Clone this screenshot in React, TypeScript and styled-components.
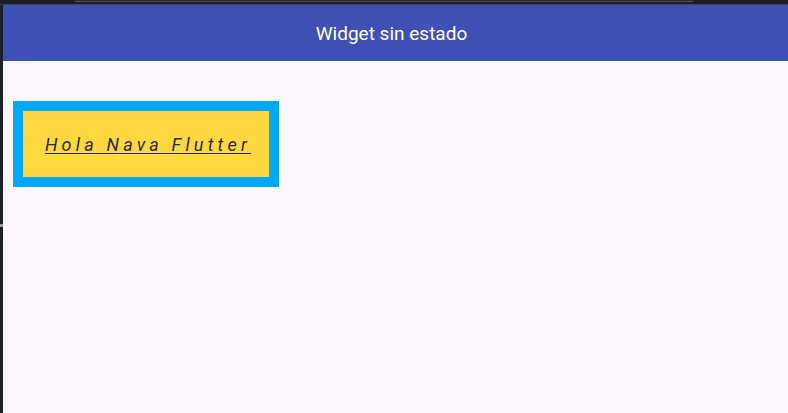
import React from "react";
import styled, { createGlobalStyle } from "styled-components";

const Global = createGlobalStyle`
  html, body { margin: 0; padding: 0; background: #1a202b; }
  body { font-family: Roboto, "Noto Sans", sans-serif; }
  #root { width: 788px; height: 413px; overflow: hidden; }
`;

const Frame = styled.div`
  width: 788px;
  height: 413px;
  display: grid;
  grid-template-columns: 3px 1fr;
  grid-template-rows: 5px 1fr;
  background: #1a202b;
`;

const TopStrip = styled.div`
  grid-column: 1 / 3;
  background: #1a202b;
  border-bottom: 1px solid #3b4150;
  box-sizing: border-box;
  display: flex;
  align-items: flex-start;
  padding-left: 75px;
`;

const UrlField = styled.div`
  width: 618px;
  height: 2px;
  background: #232a36;
  border-bottom: 1px solid #4a5060;
  box-sizing: border-box;
`;

const SideStrip = styled.div`
  background: #1a202b;
  position: relative;
`;

const SideMark = styled.div`
  position: absolute;
  left: 0;
  top: 219px;
  width: 3px;
  height: 3px;
  background: #9d8fc0;
`;

const AppWindow = styled.div`
  display: flex;
  flex-direction: column;
  background: #fdf7ff;
`;

const AppBar = styled.header`
  height: 56px;
  flex-shrink: 0;
  background: #3f51b5;
  display: flex;
  align-items: center;
  justify-content: center;
  padding-right: 8px;
`;

const Title = styled.h1`
  margin: 0;
  font-family: Roboto, sans-serif;
  font-weight: 400;
  font-size: 19px;
  color: #ffffff;
  letter-spacing: 0;
`;

const Body = styled.main`
  flex: 1;
  padding: 40px 0 0 10px;
  display: flex;
  align-items: flex-start;
`;

const OuterBox = styled.div`
  background: #03a9f4;
  padding: 10px;
`;

const InnerBox = styled.div`
  width: 246px;
  height: 66px;
  background: #fdd83f;
  display: flex;
  align-items: center;
  justify-content: center;
`;

const Greeting = styled.span`
  font-family: Roboto, sans-serif;
  font-style: italic;
  font-size: 18px;
  letter-spacing: 4.2px;
  color: #2b2b2b;
  text-decoration: underline;
  text-decoration-thickness: 1px;
  text-underline-offset: 2px;
  margin-right: -4px;
`;

export default function App() {
  return (
    <>
      <Global />
      <Frame>
        <TopStrip>
          <UrlField />
        </TopStrip>
        <SideStrip>
          <SideMark />
        </SideStrip>
        <AppWindow>
          <AppBar>
            <Title>Widget sin estado</Title>
          </AppBar>
          <Body>
            <OuterBox>
              <InnerBox>
                <Greeting>Hola Nava Flutter</Greeting>
              </InnerBox>
            </OuterBox>
          </Body>
        </AppWindow>
      </Frame>
    </>
  );
}
